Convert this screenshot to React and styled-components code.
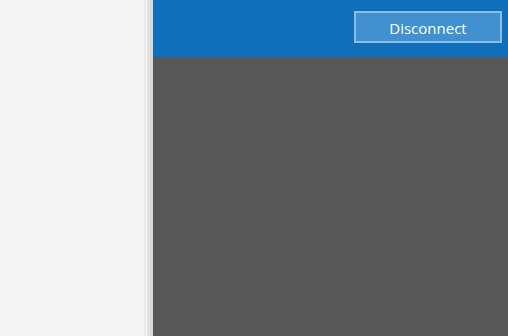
import styled, {createGlobalStyle} from 'styled-components';

const GlobalStyle = createGlobalStyle`
  html, body {
    margin: 0;
    padding: 0;
    height: 100%;
    overflow: hidden;
  }
  #root {
    height: 100%;
  }
`;

const Shell = styled.div`
  display: flex;
  width: 100%;
  height: 100vh;
  background: #f2f2f2;
  font-family: 'Open Sans', 'Liberation Sans', sans-serif;
`;

const Sidebar = styled.aside`
  width: 144px;
  flex-shrink: 0;
  background: #f3f3f3;
`;

const Splitter = styled.div`
  width: 9px;
  flex-shrink: 0;
  display: flex;
  background: #f0f0f0;
`;

const SplitLine = styled.div`
  width: ${(p) => p.$w}px;
  background: ${(p) => p.$c};
`;

const Main = styled.main`
  flex: 1;
  display: flex;
  flex-direction: column;
  background: #575757;
`;

const Header = styled.header`
  height: 57px;
  background: #0f6fbb;
  display: flex;
  justify-content: flex-end;
  align-items: flex-start;
  padding: 11px 6px 0 0;
  box-sizing: border-box;
`;

const Button = styled.button`
  width: 148px;
  height: 32px;
  box-sizing: border-box;
  background: #4190d0;
  border: 2px solid #8bbde6;
  color: #ffffff;
  font-family: inherit;
  font-size: 15px;
  padding: 1px 0 0;
  cursor: pointer;
`;

const Content = styled.div`
  flex: 1;
`;

export default function App() {
  return (
    <>
      <GlobalStyle />
      <Shell>
        <Sidebar />
        <Splitter>
          <SplitLine $w={2} $c="#ebebeb" />
          <SplitLine $w={1} $c="#f4f4f4" />
          <SplitLine $w={3} $c="#e2e2e2" />
          <SplitLine $w={3} $c="#d9d9d9" />
        </Splitter>
        <Main>
          <Header>
            <Button>Disconnect</Button>
          </Header>
          <Content />
        </Main>
      </Shell>
    </>
  );
}
